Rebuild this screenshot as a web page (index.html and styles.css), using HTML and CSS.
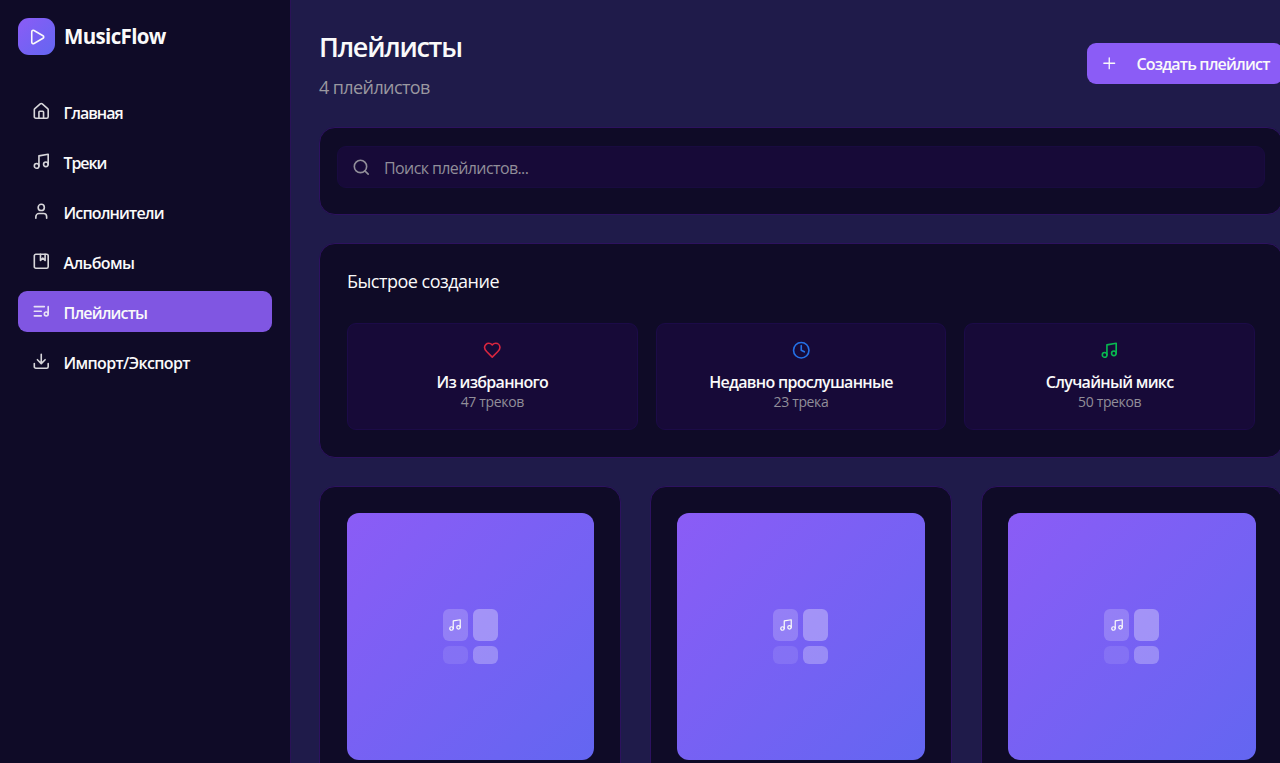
FILE: index.html
```html
<!DOCTYPE html>
<html lang="ru">
<head>
<meta charset="utf-8">
<title>MusicFlow</title>
<link rel="stylesheet" href="styles.css">
</head>
<body>
<svg class="sprite" aria-hidden="true">
  <symbol id="music" viewBox="0 0 24 24"><path d="M9 18V5l12-2v13"/><circle cx="6" cy="18" r="3"/><circle cx="18" cy="16" r="3"/></symbol>
</svg>
<div class="app">
  <aside class="sidebar">
    <div class="brand">
      <div class="logo"><svg class="icon" viewBox="0 0 24 24"><path d="M5 5a2 2 0 0 1 3.008-1.728l11.997 6.998a2 2 0 0 1 .003 3.458l-12 7A2 2 0 0 1 5 19z"/></svg></div>
      <span class="brand-name">MusicFlow</span>
    </div>
    <nav class="nav">
      <a class="nav-item"><svg class="icon" viewBox="0 0 24 24"><path d="M15 21v-8a1 1 0 0 0-1-1h-4a1 1 0 0 0-1 1v8"/><path d="M3 10a2 2 0 0 1 .709-1.528l7-5.999a2 2 0 0 1 2.582 0l7 5.999A2 2 0 0 1 21 10v9a2 2 0 0 1-2 2H5a2 2 0 0 1-2-2z"/></svg><span class="t-home">Главная</span></a>
      <a class="nav-item"><svg class="icon"><use href="#music"/></svg><span class="t-tracks">Треки</span></a>
      <a class="nav-item"><svg class="icon" viewBox="0 0 24 24"><path d="M19 21v-2a4 4 0 0 0-4-4H9a4 4 0 0 0-4 4v2"/><circle cx="12" cy="7" r="4"/></svg><span class="t-artists">Исполнители</span></a>
      <a class="nav-item"><svg class="icon" viewBox="0 0 24 24"><rect x="3" y="3" width="18" height="18" rx="2"/><path d="M11 3v8l3-3 3 3V3"/></svg><span class="t-albums">Альбомы</span></a>
      <a class="nav-item active"><svg class="icon" viewBox="0 0 24 24"><path d="M21 15V6M12 12H3M16 6H3M12 18H3"/><circle cx="18.5" cy="15.5" r="2.5"/></svg><span class="t-playlists">Плейлисты</span></a>
      <a class="nav-item"><svg class="icon" viewBox="0 0 24 24"><path d="M12 15V3M21 15v4a2 2 0 0 1-2 2H5a2 2 0 0 1-2-2v-4M7 10l5 5 5-5"/></svg><span class="t-import">Импорт/Экспорт</span></a>
    </nav>
  </aside>
  <main class="main">
    <header class="header">
      <div>
        <h1 class="title">Плейлисты</h1>
        <p class="subtitle">4 плейлистов</p>
      </div>
      <button class="create"><svg class="icon" viewBox="0 0 24 24"><path d="M5 12h14M12 5v14"/></svg><span>Создать плейлист</span></button>
    </header>
    <section class="panel search-panel">
      <div class="search"><svg class="icon" viewBox="0 0 24 24"><circle cx="11" cy="11" r="8"/><path d="m21 21-4.3-4.3"/></svg><span>Поиск плейлистов...</span></div>
    </section>
    <section class="panel quick-panel">
      <h2 class="quick-title">Быстрое создание</h2>
      <div class="quick-grid">
        <button class="quick"><svg class="icon red" viewBox="0 0 24 24"><path d="M19 14c1.49-1.46 3-3.21 3-5.5A5.5 5.5 0 0 0 16.5 3c-1.76 0-3 .5-4.5 2-1.5-1.5-2.74-2-4.5-2A5.5 5.5 0 0 0 2 8.5c0 2.3 1.5 4.05 3 5.5l7 7Z"/></svg><b>Из избранного</b><small>47 треков</small></button>
        <button class="quick"><svg class="icon blue" viewBox="0 0 24 24"><circle cx="12" cy="12" r="10"/><path d="M12 6v6l4 2"/></svg><b>Недавно прослушанные</b><small>23 трека</small></button>
        <button class="quick"><svg class="icon green"><use href="#music"/></svg><b>Случайный микс</b><small>50 треков</small></button>
      </div>
    </section>
    <section class="cards">
      <article class="panel card"><div class="cover"><div class="mosaic"><i><svg class="icon"><use href="#music"/></svg></i><i></i><i></i><i></i></div></div></article>
      <article class="panel card"><div class="cover"><div class="mosaic"><i><svg class="icon"><use href="#music"/></svg></i><i></i><i></i><i></i></div></div></article>
      <article class="panel card"><div class="cover"><div class="mosaic"><i><svg class="icon"><use href="#music"/></svg></i><i></i><i></i><i></i></div></div></article>
    </section>
  </main>
</div>
</body>
</html>
```
FILE: styles.css
```css
* { box-sizing: border-box; margin: 0; padding: 0; }
html, body { height: 100%; overflow: hidden; }
body { background: #1f1b4a; color: #fafafa; font-family: "Open Sans", "Noto Sans", sans-serif; font-size: 16px; }
.sprite { display: none; }
.icon { width: 18.5px; height: 18.5px; flex: none; fill: none; stroke: currentColor; stroke-width: 2.1; stroke-linecap: round; stroke-linejoin: round; }
button { font: inherit; color: inherit; border: 0; }
span, b, small, h1, h2, p { white-space: nowrap; }

.app { display: flex; width: 1311px; height: 100%; overflow: hidden; }
.sidebar { width: 291px; flex: none; background: #0f0b27; border-right: 1px solid #2a1258; padding: 18px; }
.brand { display: flex; align-items: center; gap: 9px; height: 37px; margin-bottom: 36px; }
.logo { width: 37px; height: 37px; border-radius: 11px; background: linear-gradient(135deg, #8b5cf6, #6366f1); display: grid; place-items: center; }
.logo .icon { width: 18px; height: 18px; }
.brand-name { font-size: 20.5px; font-weight: 700; line-height: 37px; letter-spacing: -0.65px; }
.nav { display: flex; flex-direction: column; gap: 9px; width: 254px; }
.nav-item { display: flex; align-items: center; gap: 13.5px; height: 41px; padding-left: 13.5px; border-radius: 9px; font-size: 16px; font-weight: 600; line-height: 24px; letter-spacing: -0.85px; }
.nav-item .icon { opacity: .85; }
.nav-item span { padding-top: 2px; }
.t-home { letter-spacing: -1px; }
.t-tracks { letter-spacing: -1.1px; }
.t-albums { letter-spacing: -0.6px; }
.t-import { letter-spacing: -0.63px; }
.nav-item.active { background: #8056e2; }

.main { width: 1020px; flex: none; padding: 28px; padding-top: 29px; }
.header { display: flex; justify-content: space-between; align-items: center; height: 70px; margin-bottom: 28px; }
.title { font-size: 27px; font-weight: 600; line-height: 36px; letter-spacing: -1.25px; }
.subtitle { font-size: 18px; line-height: 28px; color: #9a98a0; margin-top: 6px; letter-spacing: -0.6px; position: relative; top: 2px; }
.create { display: flex; align-items: center; gap: 18px; width: 196px; height: 41px; margin-bottom: 2px; padding-left: 13px; border-radius: 9px; background: #8b5cf6; font-size: 16px; font-weight: 600; letter-spacing: -0.82px; }
.create span { padding-top: 2px; }
.create .icon { stroke-width: 1.7; }
.panel { background: #0f0b27; border: 1px solid #2d125f; border-radius: 16px; }
.search-panel { height: 88px; padding: 18px 17px; margin-bottom: 28px; }
.search { display: flex; align-items: center; gap: 14px; height: 42px; padding-left: 13.5px; border-radius: 9px; background: #170a38; border: 1px solid #190b40; font-size: 16px; letter-spacing: -0.6px; color: #918e99; }
.search span { padding-top: 2px; }
.quick-panel { height: 215px; padding: 23px 27px 0; margin-bottom: 27.5px; }
.quick-title { font-size: 18px; font-weight: 400; line-height: 28px; margin-bottom: 27.5px; letter-spacing: -0.5px; }
.quick-grid { display: grid; grid-template-columns: repeat(3, 1fr); gap: 18px; }
.quick { display: flex; flex-direction: column; align-items: center; height: 107px; padding-top: 17.5px; border-radius: 9px; background: #170a38; border: 1px solid #1c0b48; }
.quick b { font-size: 16px; font-weight: 600; line-height: 22px; margin-top: 11px; letter-spacing: -0.7px; }
.quick small { font-size: 14px; font-weight: 500; line-height: 18px; color: #918e99; letter-spacing: -0.35px; }
.red { color: #d9263f; }
.blue { color: #2470e6; }
.green { color: #08b850; }
.cards { display: grid; grid-template-columns: repeat(3, 1fr); gap: 28.5px; }
.card { height: 400px; padding: 26.5px; }
.cover { aspect-ratio: 1; border-radius: 12px; background: linear-gradient(135deg, #8b5cf6, #6366f1); display: grid; place-items: center; }
.mosaic { display: grid; grid-template: 32px 18px / 25px 25px; gap: 5px; }
.mosaic i { border-radius: 6px; background: rgba(255,255,255,.2); display: grid; place-items: center; }
.mosaic i:nth-child(2) { background: rgba(255,255,255,.32); }
.mosaic i:nth-child(3) { background: rgba(255,255,255,.1); }
.mosaic i:nth-child(4) { background: rgba(255,255,255,.27); }
.mosaic .icon { width: 14px; height: 14px; }
```
